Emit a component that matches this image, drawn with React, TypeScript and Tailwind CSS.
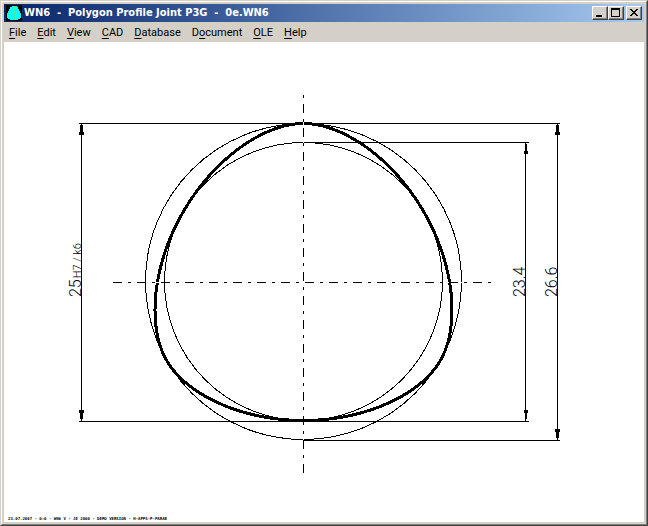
import type { ReactNode } from "react";

const menuItems = [
  { before: "", key: "F", after: "ile" },
  { before: "", key: "E", after: "dit" },
  { before: "", key: "V", after: "iew" },
  { before: "", key: "C", after: "AD" },
  { before: "", key: "D", after: "atabase" },
  { before: "D", key: "o", after: "cument" },
  { before: "", key: "O", after: "LE" },
  { before: "", key: "H", after: "elp" },
];

// P3G profile: mean radius R, eccentricity E
const CX = 303.5;
const CY = 281.5;
const R = 148.5;
const E = 9.5;

const profilePath = () => {
  const points: string[] = [];
  for (let deg = 0; deg < 360; deg += 2) {
    const a = (deg * Math.PI) / 180;
    const p = R + E * Math.cos(3 * a);
    const dp = -3 * E * Math.sin(3 * a);
    const x = CX + p * Math.sin(a) + dp * Math.cos(a);
    const y = CY - p * Math.cos(a) + dp * Math.sin(a);
    points.push(`${x.toFixed(2)} ${y.toFixed(2)}`);
  }
  return `M${points.join("L")}Z`;
};

const AppIcon = () => (
  <svg viewBox="0 0 16 16" className="size-4 shrink-0" shapeRendering="crispEdges" aria-hidden="true">
    <rect width="16" height="16" fill="#000" />
    <path
      d="M6 1h5v1h1v2h1v2h1v2h1v5h-1v1h-2v1H4v-1H2v-1H1V8h1V6h1V4h1V2h2z"
      fill="#00ffff"
    />
    <path d="M8.5 1v14M1 8.5h14" stroke="#58e878" strokeDasharray="3 1 1 1" />
  </svg>
);

const CaptionButton = ({ label, children }: { label: string; children: ReactNode }) => (
  <button
    type="button"
    aria-label={label}
    className="h-[14px] w-4 border border-t-white border-l-white border-r-[#404040] border-b-[#404040] bg-[#d4d0c8] shadow-[inset_-1px_-1px_0_#808080]"
  >
    <svg viewBox="0 0 14 12" className="block h-3 w-[14px]" shapeRendering="crispEdges" aria-hidden="true">
      {children}
    </svg>
  </button>
);

const TitleBar = () => (
  <header className="flex h-[18px] items-center bg-linear-to-r from-[#0a246a] to-[#a6caf0] px-[2px]">
    <AppIcon />
    <h1 className="ml-[2px] flex-1 truncate font-['DejaVu_Sans_Condensed','DejaVu_Sans',sans-serif] text-[11px] leading-[18px] font-bold whitespace-pre text-white">
      {"WN6  -  Polygon Profile Joint P3G  -  0e.WN6"}
    </h1>
    <div className="flex">
      <CaptionButton label="Minimize">
        <path d="M3 8h6v2H3z" />
      </CaptionButton>
      <CaptionButton label="Maximize">
        <path d="M2 1h9v9H2zM3 3v6h7V3z" fillRule="evenodd" />
      </CaptionButton>
    </div>
    <div className="ml-[2px] flex">
      <CaptionButton label="Close">
        <path d="M3 2h2v1h1v1h2V3h1V2h2v1h-1v1H9v1H8v1h1v1h1v1h1v1H9V8H8V7H6v1H5v1H3V8h1V7h1V6h1V5H5V4H4V3H3z" />
      </CaptionButton>
    </div>
  </header>
);

const MenuBar = () => (
  <nav className="flex h-5 items-end gap-[11px] px-[5px] pb-px font-[Roboto,sans-serif] text-[11px] leading-4 text-black">
    {menuItems.map((item) => (
      <button type="button" key={item.key + item.after}>
        {item.before}
        <span className="underline underline-offset-2">{item.key}</span>
        {item.after}
      </button>
    ))}
  </nav>
);

const Drawing = () => (
  <svg viewBox="4 42 640 480" className="block w-full" role="img" aria-label="Polygon profile P3G">
    <g fill="none" stroke="#000" shapeRendering="crispEdges">
      <circle cx={CX} cy={CY} r={R + E} />
      <circle cx={CX} cy={CY} r={R - E} />
      <path d={profilePath()} strokeWidth="3" />

      {/* centre lines */}
      <path d="M303.5 95V473M113 282.5H491" stroke="#fff" />
      <path d="M303.5 473V95M113 282.5H491" strokeDasharray="9 6 3 6" />

      {/* extension and dimension lines */}
      <path d="M79 123.5H303M304 123.5H560M79 421.5H529M304 142.5H529M304 440.5H560" />
      <path d="M81.5 123V421M525.5 142V421M557.5 123V440" />
    </g>

    <g shapeRendering="crispEdges">
      <path d="M80 125h3v7h1v3h-5v-3h1zM79 410h5v3h-1v6h-3v-6h-1z" />
      <path d="M556 125h3v7h1v3h-5v-3h1zM555 429h5v3h-1v6h-3v-6h-1z" />
      <path d="M525 144h2v7h1v3h-4v-3h1zM524 410h4v3h-1v6h-2v-6h-1z" />
    </g>

    <g className="font-[Roboto,sans-serif] font-light" fill="#000">
      <text transform="translate(81 297) rotate(-90)" className="text-[16px]">
        25
        <tspan dx="1" className="text-[11px]">H7 / k6</tspan>
      </text>
      <text transform="translate(525 297) rotate(-90)" className="text-[16px]">23.4</text>
      <text transform="translate(557 297) rotate(-90)" className="text-[16px]">26.6</text>
    </g>

    <text x="8" y="520" className="font-['DejaVu_Sans_Mono',monospace] text-[4px] font-bold">
      23.07.2007 - 0:0 - WN6 V - JE 2000 - DEMO VERSION - H-APPS-P-PARAB
    </text>
  </svg>
);

const App = () => {
  return (
    <div className="flex min-h-screen flex-col border border-t-[#d4d0c8] border-l-[#d4d0c8] border-r-[#404040] border-b-[#404040] bg-[#d4d0c8]">
      <div className="flex flex-1 flex-col border border-t-white border-l-white border-r-[#808080] border-b-[#808080] p-[2px]">
        <TitleBar />
        <MenuBar />
        <main className="flex-1 bg-white">
          <Drawing />
        </main>
      </div>
    </div>
  );
};

export default App;
